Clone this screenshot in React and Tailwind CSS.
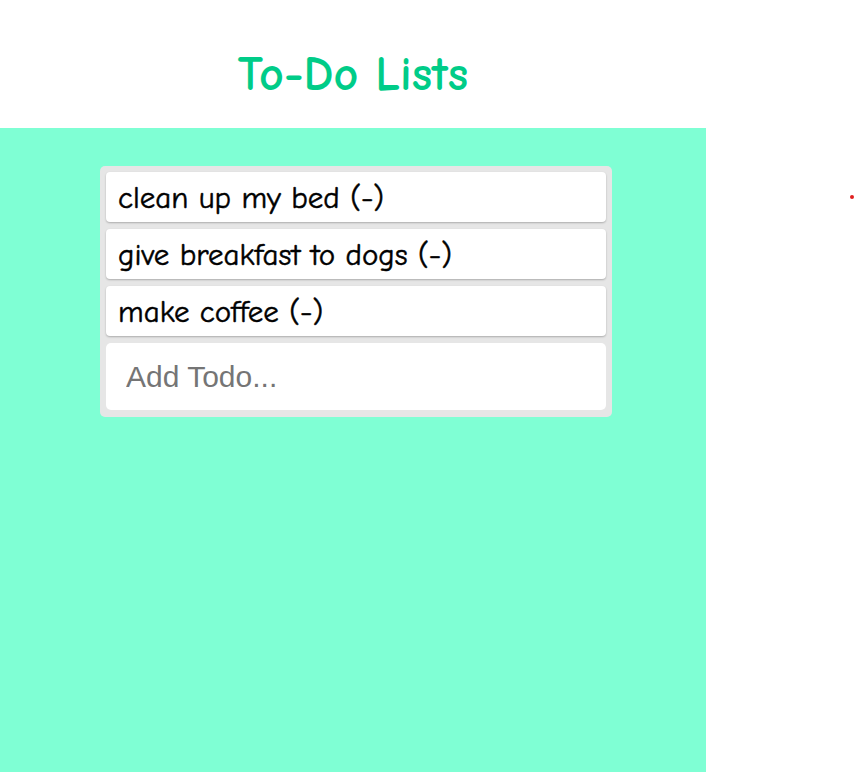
import React, { useState } from 'react';

const comic = { fontFamily: '"Comic Sans MS", "Comic Neue", "DejaVu Sans", sans-serif' };

export default function App() {
  const [todos] = useState(['clean up my bed', 'give breakfast to dogs', 'make coffee']);
  const [text, setText] = useState('');

  return (
    <div className="relative min-h-[772px] bg-white">
      <div className="w-[706px]">
        {/* Header */}
        <div className="h-[128px] flex items-center justify-center">
          <h1 className="text-[48px] font-bold text-[#00cc88] mt-[22px]" style={comic}>
            To-Do Lists
          </h1>
        </div>

        {/* Board */}
        <div className="bg-[#7fffd4] min-h-[644px] pt-[38px] pl-[100px]">
          <div className="w-[512px] bg-[#e6e6e6] rounded-[5px] pt-[6px] px-[6px] pb-[7px] flex flex-col gap-[7px]">
            {todos.map((t, i) => (
              <div
                key={i}
                className="h-[50px] bg-white rounded-[4px] shadow-[0_1px_2px_rgba(0,0,0,0.25)] flex items-center pl-[12px] pt-[3px] text-[31px] text-black [-webkit-text-stroke:0.5px_#000]"
                style={comic}
              >
                {t} (-)
              </div>
            ))}
            <input
              value={text}
              onChange={(e) => setText(e.target.value)}
              placeholder="Add Todo..."
              className="h-[67px] bg-white rounded-[5px] pl-[20px] text-[30px] outline-none placeholder:text-[#757575] font-['Liberation_Sans',Arial,sans-serif]"
            />
          </div>
        </div>
      </div>

      {/* stray dot */}
      <div className="absolute left-[850px] top-[195px] w-[4px] h-[4px] rounded-full bg-[#e02020]" />
    </div>
  );
}
